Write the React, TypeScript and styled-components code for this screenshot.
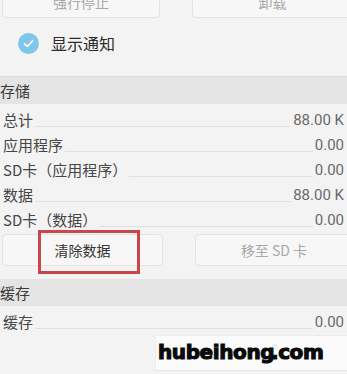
import styled, { createGlobalStyle } from 'styled-components';

const GlobalStyle = createGlobalStyle`
  html, body {
    margin: 0;
    padding: 0;
    background: #f3f3f3;
    font-family: "Noto Sans CJK SC", "Noto Sans", sans-serif;
  }
`;

const StyledPage = styled.div`
  position: relative;
  width: 347px;
  height: 374px;
  overflow: hidden;
  background: #f3f3f3;
`;

const StyledButtonRow = styled.div<{ $top: number; $first: number }>`
  display: grid;
  grid-template-columns: ${({ $first }) => $first}px 1fr;
  column-gap: 32px;
  padding-left: 2px;
  margin-top: ${({ $top }) => $top}px;
  margin-right: -6px;
`;

const StyledActionBtn = styled.div<{ $muted?: boolean }>`
  position: relative;
  height: 32px;
  display: flex;
  align-items: center;
  justify-content: center;
  background: #f7f7f7;
  border: 1px solid #e3e3e3;
  border-radius: 4px;
  box-sizing: border-box;
  font-size: 14px;
  color: ${({ $muted }) => ($muted ? '#a8a8a8' : '#333')};
`;

const StyledHighlight = styled.div`
  position: absolute;
  left: 35px;
  top: -5px;
  width: 102px;
  height: 44px;
  border: 3px solid #c9474a;
  box-sizing: border-box;
`;

const StyledToggleRow = styled.div`
  display: flex;
  align-items: center;
  gap: 12px;
  height: 50px;
  padding: 0 0 8px 18px;
  border-bottom: 1px solid #dcdcdc;
  font-size: 16px;
  color: #2b2b2b;
`;

const StyledCheck = styled.span`
  width: 21px;
  height: 21px;
  border-radius: 50%;
  background: #7fc7ea;
  display: flex;
  align-items: center;
  justify-content: center;
`;

const StyledSection = styled.div<{ $gapTop?: number }>`
  height: 27px;
  display: flex;
  align-items: center;
  margin-top: ${({ $gapTop }) => $gapTop ?? 0}px;
  background: #e4e4e4;
  font-size: 15px;
  color: #3a3a3a;
`;

const StyledList = styled.div`
  display: flex;
  flex-direction: column;
  padding: 3px 3px 0 3px;
`;

const StyledRow = styled.div`
  height: 25px;
  display: flex;
  align-items: center;
  font-size: 15px;
`;

const StyledLabel = styled.span`
  color: #464646;
  white-space: nowrap;
`;

const StyledLeader = styled.span`
  flex: 1;
  align-self: flex-end;
  margin: 0 2px 5px;
  border-bottom: 1px solid #e0e0e0;
`;

const StyledValue = styled.span`
  color: #6a6a6a;
  font-family: Roboto, "Liberation Sans", sans-serif;
  font-size: 15px;
`;

const StyledWatermark = styled.div`
  position: absolute;
  left: 155px;
  top: 335px;
  width: 200px;
  height: 36px;
  background: #fbfbfb;
  border-top: 1px solid #ececec;
  border-left: 1px solid #ececec;
  border-bottom: 1px solid #e4e4e4;
  display: flex;
  align-items: center;
  padding: 0 0 2px 2px;
  box-sizing: border-box;
  font-family: "DejaVu Sans", sans-serif;
  font-weight: 700;
  font-size: 20px;
  letter-spacing: -0.4px;
  color: #0a0a0a;
  -webkit-text-stroke: 1.1px #0a0a0a;
`;

const StyledStar = styled.span`
  font-size: 8px;
  color: #b8b8b8;
  -webkit-text-stroke: 0;
  margin: -12px -7px 0 -3px;
`;

const storage = [
  { label: '总计', value: '88.00 K' },
  { label: '应用程序', value: '0.00' },
  { label: 'SD卡（应用程序）', value: '0.00' },
  { label: '数据', value: '88.00 K' },
  { label: 'SD卡（数据）', value: '0.00' },
];

const App = () => (
  <StyledPage>
    <GlobalStyle />
    <StyledButtonRow $top={-14} $first={158}>
      <StyledActionBtn $muted>强行停止</StyledActionBtn>
      <StyledActionBtn $muted>卸载</StyledActionBtn>
    </StyledButtonRow>

    <StyledToggleRow>
      <StyledCheck>
        <svg width="13" height="13" viewBox="0 0 14 14">
          <path d="M2.5 7.2 L5.8 10.2 L11.5 4" fill="none" stroke="#fff" strokeWidth="1.8" strokeLinecap="round" strokeLinejoin="round" />
        </svg>
      </StyledCheck>
      显示通知
    </StyledToggleRow>

    <StyledSection>存储</StyledSection>
    <StyledList>
      {storage.map((item) => (
        <StyledRow key={item.label}>
          <StyledLabel>{item.label}</StyledLabel>
          <StyledLeader />
          <StyledValue>{item.value}</StyledValue>
        </StyledRow>
      ))}
    </StyledList>

    <StyledButtonRow $top={2} $first={161}>
      <StyledActionBtn>
        清除数据
        <StyledHighlight />
      </StyledActionBtn>
      <StyledActionBtn $muted>移至 SD 卡</StyledActionBtn>
    </StyledButtonRow>

    <StyledSection $gapTop={13}>缓存</StyledSection>
    <StyledList>
      <StyledRow>
        <StyledLabel>缓存</StyledLabel>
        <StyledLeader />
        <StyledValue>0.00</StyledValue>
      </StyledRow>
    </StyledList>

    <StyledWatermark>
      hubeihong<StyledStar>☆</StyledStar>.com
    </StyledWatermark>
  </StyledPage>
);

export default App;
